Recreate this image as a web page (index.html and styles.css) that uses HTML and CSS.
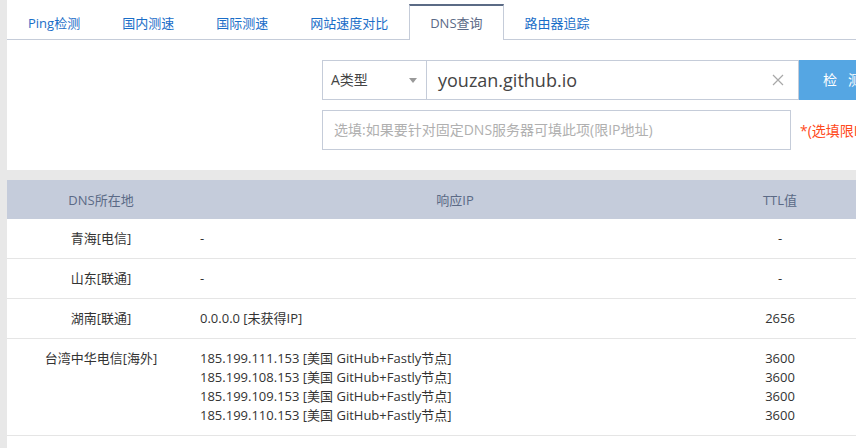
FILE: index.html
```html
<!doctype html>
<html lang="zh-CN">
<head>
    <meta charset="UTF-8">
    <title>DNS查询</title>
    <link rel="stylesheet" href="styles.css">
</head>
<body>
<div class="wrap">
    <div class="panel">
        <ul class="tabs">
            <li>Ping检测</li>
            <li>国内测速</li>
            <li>国际测速</li>
            <li>网站速度对比</li>
            <li class="on">DNS查询</li>
            <li>路由器追踪</li>
        </ul>
        <div class="form">
            <div class="row">
                <div class="select">A类型<span class="arrow"></span></div>
                <div class="host">
                    <span class="val">youzan.github.io</span>
                    <svg class="clear" width="12" height="12" viewBox="0 0 12 12"><path d="M1 1L11 11M11 1L1 11" stroke="#a8a8a8" stroke-width="1.2" fill="none"/></svg>
                </div>
                <div class="btn">检&nbsp;&nbsp;&nbsp;测</div>
            </div>
            <div class="row">
                <div class="server">选填:如果要针对固定DNS服务器可填此项(限IP地址)</div>
                <span class="tip">*(选填限IP地址)</span>
            </div>
        </div>
    </div>
    <div class="list">
        <table class="result">
            <thead>
                <tr><th class="c1">DNS所在地</th><th class="c2">响应IP</th><th class="c3">TTL值</th><th></th></tr>
            </thead>
            <tbody>
                <tr><td class="c1">青海[电信]</td><td class="c2">-</td><td class="c3">-</td><td></td></tr>
                <tr><td class="c1">山东[联通]</td><td class="c2">-</td><td class="c3">-</td><td></td></tr>
                <tr><td class="c1">湖南[联通]</td><td class="c2">0.0.0.0 [未获得IP]</td><td class="c3">2656</td><td></td></tr>
                <tr>
                    <td class="c1">台湾中华电信[海外]</td>
                    <td class="c2">185.199.111.153 [美国 GitHub+Fastly节点]<br>185.199.108.153 [美国 GitHub+Fastly节点]<br>185.199.109.153 [美国 GitHub+Fastly节点]<br>185.199.110.153 [美国 GitHub+Fastly节点]</td>
                    <td class="c3">3600<br>3600<br>3600<br>3600</td>
                    <td></td>
                </tr>
            </tbody>
        </table>
    </div>
</div>
</body>
</html>
```
FILE: styles.css
```css
*{
    margin: 0;
    padding: 0;
    list-style: none;
    box-sizing: border-box;
}
html,body{
    height: 100%;
}
body{
    background: #e8e8e8;
    font-family: "Open Sans", "Noto Sans CJK SC", sans-serif;
    font-size: 13px;
    color: #333;
    overflow: hidden;
}
.wrap{
    margin-left: 7px;
    height: 100%;
    display: flex;
    flex-direction: column;
}
.panel{
    background: #fff;
    padding-bottom: 20px;
    margin-bottom: 10px;
}
.tabs{
    display: flex;
    padding-top: 4px;
    height: 40px;
    border-bottom: 1px solid #c5ccd9;
}
.tabs li{
    height: 36px;
    line-height: 34px;
    padding: 0 20px;
    border: 1px solid transparent;
    border-top-width: 2px;
    border-bottom: none;
    color: #1a6ec8;
    font-size: 13px;
}
.tabs li.on{
    color: #5b6a86;
    background: #fff;
    border-color: #c5ccd9;
    border-top-color: #5b6b85;
}
.form{
    margin: 20px 0 0 315px;
}
.row{
    display: flex;
    align-items: center;
    height: 40px;
}
.row > *{
    flex-shrink: 0;
}
.row + .row{
    margin-top: 10px;
}
.select{
    position: relative;
    width: 105px;
    height: 40px;
    line-height: 38px;
    border: 1px solid #c5ccd9;
    padding-left: 8px;
    font-size: 14px;
    color: #444;
}
.arrow{
    position: absolute;
    right: 9px;
    top: 17px;
    border-left: 4px solid transparent;
    border-right: 4px solid transparent;
    border-top: 5px solid #999;
}
.host{
    display: flex;
    align-items: center;
    justify-content: space-between;
    width: 372px;
    height: 40px;
    border: 1px solid #c5ccd9;
    border-left: none;
    padding: 0 14px 0 11px;
}
.host .val{
    font-size: 18px;
    color: #444;
}
.btn{
    width: 100px;
    height: 40px;
    line-height: 40px;
    background: #55a6e3;
    color: #fff;
    font-size: 14px;
    padding-left: 24px;
    white-space: nowrap;
}
.server{
    width: 469px;
    height: 40px;
    line-height: 38px;
    border: 1px solid #c5ccd9;
    padding-left: 11px;
    font-size: 14px;
    color: #b0b0b0;
}
.tip{
    margin-left: 9px;
    font-size: 14px;
    color: #ff4a1c;
    white-space: nowrap;
}
.list{
    flex-grow: 1;
    background: #fff;
}
.result{
    width: 849px;
    border-collapse: collapse;
}
.result th{
    height: 39px;
    background: #c5ccdb;
    color: #5b6a86;
    font-weight: normal;
    text-align: center;
}
.result td{
    padding: 10px 0;
    line-height: 19px;
    vertical-align: top;
    border-bottom: 1px solid #e5e5e5;
}
.c1{
    width: 188px;
    text-align: center;
}
.c2{
    width: 520px;
}
td.c2{
    padding-left: 5px;
}
.c3{
    width: 130px;
    text-align: center;
}
```
